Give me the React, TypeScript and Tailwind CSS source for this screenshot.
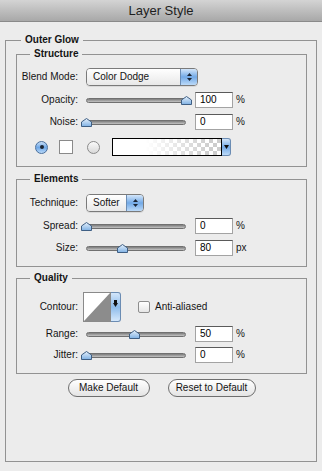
import React from "react";

function Thumb() {
  return (
    <svg width="11" height="9" viewBox="0 0 11 9">
      <defs>
        <linearGradient id="thg" x1="0" y1="0" x2="0" y2="1">
          <stop offset="0" stopColor="#e6f1fc" />
          <stop offset="1" stopColor="#7fb1e4" />
        </linearGradient>
      </defs>
      <path d="M5.5 0.5 L10.5 4 V8.5 H0.5 V4 Z" fill="url(#thg)" stroke="#3f5f84" strokeWidth="1" />
    </svg>
  );
}

function Slider({ pos }: { pos: number }) {
  return (
    <div className="relative w-[100px] h-[16px] shrink-0">
      <div className="absolute left-0 right-0 top-[6px] h-[5px] rounded-full border border-[#707070] bg-gradient-to-b from-[#7c7c7c] to-[#c4c4c4]" />
      <div className="absolute top-[4px] flex" style={{ left: pos - 5.5 }}>
        <Thumb />
      </div>
    </div>
  );
}

function Field({ v }: { v: string }) {
  return (
    <div className="w-[38px] h-[16px] shrink-0 bg-white border border-[#a3a3a3] border-t-[#5a5a5a] pl-[4px] text-[10px] leading-[14px] text-black">
      {v}
    </div>
  );
}

function Row({
  label,
  children,
  className = "",
  gap = "ml-[8px]",
}: {
  label: string;
  children: React.ReactNode;
  className?: string;
  gap?: string;
}) {
  return (
    <div className={"flex items-center " + className}>
      <div className="w-[61px] shrink-0 text-right leading-[12px]">{label}</div>
      <div className={"flex items-center " + gap}>{children}</div>
    </div>
  );
}

function SliderRow({
  label,
  pos,
  value,
  unit,
  className = "",
}: {
  label: string;
  pos: number;
  value: string;
  unit: string;
  className?: string;
}) {
  return (
    <Row label={label} className={"h-[16px] " + className}>
      <Slider pos={pos} />
      <div className="ml-[9px]">
        <Field v={value} />
      </div>
      <div className="ml-[3px] leading-[12px]">{unit}</div>
    </Row>
  );
}

function Arrows() {
  return (
    <div className="flex flex-col items-center gap-[2px]">
      <svg width="5" height="3" viewBox="0 0 5 3">
        <path d="M2.5 0 L5 3 H0 Z" fill="#1b2636" />
      </svg>
      <svg width="5" height="3" viewBox="0 0 5 3">
        <path d="M0 0 H5 L2.5 3 Z" fill="#1b2636" />
      </svg>
    </div>
  );
}

function Popup({ text, width }: { text: string; width: string }) {
  return (
    <div className={"flex h-[18px] rounded-[4px] border border-[#7a7a7a] overflow-hidden shadow-[0_1px_0_rgba(0,0,0,0.08)] " + width}>
      <div className="flex-1 bg-gradient-to-b from-white to-[#e8e8e8] pl-[6px] leading-[16px]">{text}</div>
      <div className="w-[17px] border-l border-[#6b8cb3] bg-gradient-to-b from-[#d3e6fa] via-[#72a9e6] to-[#bcdaf8] flex items-center justify-center">
        <Arrows />
      </div>
    </div>
  );
}

function Radio({ on }: { on: boolean }) {
  if (on)
    return (
      <div className="w-[13px] h-[13px] rounded-full border border-[#4a6f9c] bg-gradient-to-b from-[#c7def6] via-[#6ea7e6] to-[#b8d8f8] flex items-center justify-center">
        <div className="w-[4px] h-[4px] rounded-full bg-[#1c2533]" />
      </div>
    );
  return <div className="w-[13px] h-[13px] rounded-full border border-[#8a8a8a] bg-gradient-to-b from-[#fafafa] to-[#d9d9d9]" />;
}

function GradientSwatch() {
  return (
    <div className="flex h-[18px]">
      <div className="w-[110px] h-[18px] border border-black bg-white">
        <svg width="108" height="16" viewBox="0 0 108 16" className="block">
          <defs>
            <pattern id="chk" width="8" height="8" patternUnits="userSpaceOnUse">
              <rect width="8" height="8" fill="#ffffff" />
              <rect width="4" height="4" fill="#cdcdcd" />
              <rect x="4" y="4" width="4" height="4" fill="#cdcdcd" />
            </pattern>
            <linearGradient id="fade" x1="0" y1="0" x2="1" y2="0">
              <stop offset="0.3" stopColor="#ffffff" stopOpacity="1" />
              <stop offset="0.9" stopColor="#ffffff" stopOpacity="0" />
            </linearGradient>
          </defs>
          <rect width="108" height="16" fill="url(#chk)" />
          <rect width="108" height="16" fill="url(#fade)" />
        </svg>
      </div>
      <div className="w-[9px] h-[18px] rounded-r-[3px] border border-l-0 border-[#6b8cb3] bg-gradient-to-b from-[#d3e6fa] via-[#72a9e6] to-[#bcdaf8] flex items-center justify-center">
        <svg width="5" height="4" viewBox="0 0 5 4">
          <path d="M0 0 H5 L2.5 4 Z" fill="#111" />
        </svg>
      </div>
    </div>
  );
}

function Contour() {
  return (
    <div className="flex h-[30px]">
      <div className="w-[28px] h-[30px] border border-[#8a8a8a] bg-white">
        <svg width="26" height="28" viewBox="0 0 26 28" className="block">
          <rect width="26" height="28" fill="#ffffff" />
          <polygon points="0,28 26,0 26,28" fill="#8c8c8c" />
        </svg>
      </div>
      <div className="w-[10px] h-[30px] rounded-r-[3px] border border-l-0 border-[#6b8cb3] bg-gradient-to-b from-[#d3e6fa] via-[#8dbbea] to-[#d5e8fb] flex justify-center pt-[7px]">
        <svg width="5" height="8" viewBox="0 0 5 8">
          <rect x="1" y="0" width="3" height="3" fill="#111" />
          <path d="M0 3 H5 L2.5 7 Z" fill="#111" />
        </svg>
      </div>
    </div>
  );
}

function Button({ text, width }: { text: string; width: string }) {
  return (
    <div className={"h-[18px] rounded-full border border-[#6e6e6e] bg-gradient-to-b from-white to-[#e4e4e4] flex items-center justify-center leading-[12px] " + width}>
      {text}
    </div>
  );
}

function Legend({ text, ml }: { text: string; ml: string }) {
  return (
    <div className={"-mt-[7px] w-fit px-[4px] bg-[#ececec] font-bold leading-[12px] " + ml}>{text}</div>
  );
}

export default function App() {
  return (
    <div className="w-[322px] h-[471px] bg-[#ececec] flex flex-col font-['Liberation_Sans',Arial,sans-serif] text-[10px] text-[#141414] overflow-hidden">
      <div className="h-[22px] shrink-0 border-b border-[#8a8a8a] bg-gradient-to-b from-[#d4d4d4] to-[#a8a8a8] flex items-center justify-center text-[13px] text-[#1e1e1e]">
        Layer Style
      </div>
      <div className="mx-[5px] mt-[18px] mb-[9px] flex-1 border border-[#929292] pl-[10px] pr-[9px]">
        <Legend text="Outer Glow" ml="ml-[5px]" />

        <div className="mt-[8px] border border-[#929292] pb-[10px]">
          <Legend text="Structure" ml="ml-[13px]" />
          <Row label="Blend Mode:" className="mt-[8px] h-[18px]">
            <Popup text="Color Dodge" width="w-[112px]" />
          </Row>
          <SliderRow label="Opacity:" pos={100} value="100" unit="%" className="mt-[6px]" />
          <SliderRow label="Noise:" pos={0} value="0" unit="%" className="mt-[6px]" />
          <div className="mt-[8px] h-[18px] flex items-center pl-[18px]">
            <Radio on />
            <div className="ml-[11px] w-[14px] h-[14px] border border-[#8a8a8a] bg-white" />
            <div className="ml-[14px]">
              <Radio on={false} />
            </div>
            <div className="ml-[12px]">
              <GradientSwatch />
            </div>
          </div>
        </div>

        <div className="mt-[12px] border border-[#929292] pb-[10px]">
          <Legend text="Elements" ml="ml-[13px]" />
          <Row label="Technique:" className="mt-[9px] h-[18px]">
            <Popup text="Softer" width="w-[58px]" />
          </Row>
          <SliderRow label="Spread:" pos={0} value="0" unit="%" className="mt-[6px]" />
          <SliderRow label="Size:" pos={36} value="80" unit="px" className="mt-[6px]" />
        </div>

        <div className="mt-[11px] border border-[#929292] pb-[10px]">
          <Legend text="Quality" ml="ml-[13px]" />
          <Row label="Contour:" className="mt-[8px] h-[30px]" gap="ml-[5px]">
            <Contour />
            <div className="ml-[17px] w-[12px] h-[12px] rounded-[2px] border border-[#8d8d8d] bg-gradient-to-b from-white to-[#e6e6e6]" />
            <div className="ml-[5px] leading-[12px]">Anti-aliased</div>
          </Row>
          <SliderRow label="Range:" pos={48} value="50" unit="%" className="mt-[4px]" />
          <SliderRow label="Jitter:" pos={0} value="0" unit="%" className="mt-[5px]" />
        </div>

        <div className="mt-[5px] flex justify-center gap-[18px]">
          <Button text="Make Default" width="w-[82px]" />
          <Button text="Reset to Default" width="w-[88px]" />
        </div>
      </div>
    </div>
  );
}
